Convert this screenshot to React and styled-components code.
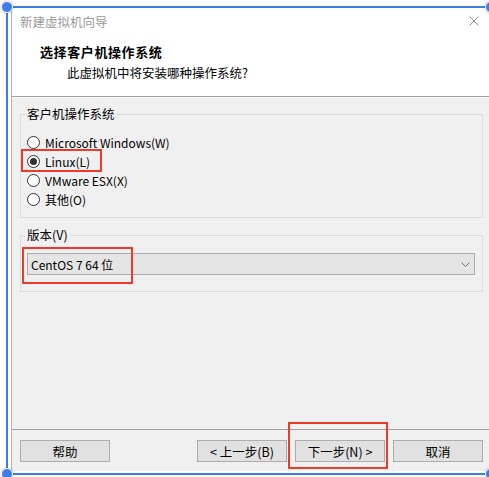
import React from "react";
import styled, { createGlobalStyle } from "styled-components";

const GlobalStyle = createGlobalStyle`
  html, body { margin: 0; padding: 0; background: #ffffff; }
  body {
    width: 489px;
    height: 477px;
    overflow: hidden;
    font-family: "Noto Sans CJK SC", "Microsoft YaHei", sans-serif;
    font-size: 12.5px;
    color: #000;
  }
  * { box-sizing: border-box; }
`;

const Stage = styled.div`
  position: relative;
  width: 489px;
  height: 477px;
  overflow: hidden;
`;

const Selection = styled.div`
  position: relative;
  margin: 6px 0 0 6px;
  width: 486px;
  height: 469px;
  border: 2px solid #3b7ee6;
  padding: 0 0 2px 3px;
  display: flex;
`;

const Handle = styled.div`
  position: absolute;
  width: 12px;
  height: 12px;
  border-radius: 50%;
  background: #3b7ee6;
  border: 1.5px solid #ffffff;
  box-shadow: 0 0 2px rgba(0, 0, 0, 0.35);
  left: ${(p) => (p.$right ? "auto" : "-7px")};
  right: ${(p) => (p.$right ? "-7px" : "auto")};
  top: ${(p) => (p.$bottom ? "auto" : "-7px")};
  bottom: ${(p) => (p.$bottom ? "-7px" : "auto")};
  z-index: 3;
`;

const Dialog = styled.div`
  flex: 1;
  display: flex;
  flex-direction: column;
  border-left: 1px solid #b4b4b4;
  background: #ffffff;
`;

const TitleBar = styled.div`
  height: 26px;
  display: flex;
  align-items: center;
  justify-content: space-between;
  padding: 0 11px 0 8px;
  color: #9a9a9a;
`;

const Header = styled.div`
  height: 63px;
  padding-top: 9px;
  display: flex;
  flex-direction: column;
  border-bottom: 1px solid #a0a0a0;
`;

const HeaderTitle = styled.div`
  padding-left: 28px;
  line-height: 18px;
  font-weight: 700;
  font-size: 13px;
  letter-spacing: 0.6px;
`;

const HeaderSub = styled.div`
  padding-left: 55px;
  margin-top: 3px;
  line-height: 18px;
`;

const Body = styled.div`
  flex: 1;
  background: #f0f0f0;
  border-top: 1px solid #ffffff;
  padding: 0 7px 0 8px;
  display: flex;
  flex-direction: column;
`;

const GroupBox = styled.div`
  border: 1px solid #dcdcdc;
  margin-top: ${(p) => p.$top}px;
  padding-bottom: ${(p) => p.$bottom}px;
  display: flex;
  flex-direction: column;
`;

const Legend = styled.div`
  align-self: flex-start;
  margin: -9px 0 0 4px;
  padding: 0 2px;
  line-height: 16px;
  background: #f0f0f0;
`;

const RadioList = styled.div`
  margin-top: 11px;
  display: flex;
  flex-direction: column;
`;

const RadioRow = styled.div`
  height: 19px;
  display: flex;
  align-items: center;
  padding-left: 6px;
  gap: 5px;
  font-size: 12px;
`;

const RadioCircle = styled.span`
  width: 13px;
  height: 13px;
  border-radius: 50%;
  border: 1px solid #333333;
  background: #ffffff;
  display: flex;
  align-items: center;
  justify-content: center;
  &::after {
    content: "";
    width: 7px;
    height: 7px;
    border-radius: 50%;
    background: ${(p) => (p.$checked ? "#333333" : "transparent")};
  }
`;

const Select = styled.div`
  margin: 10px 7px 0 6px;
  height: 22px;
  border: 1px solid #acacac;
  background: #e5e5e5;
  display: flex;
  align-items: center;
  justify-content: space-between;
  padding: 0 4px 0 3px;
  font-size: 12px;
`;

const Footer = styled.div`
  background: #f0f0f0;
  border-top: 1px solid #a0a0a0;
  padding: 10px 7px 9px 8px;
  display: flex;
  gap: 8px;
`;

const Button = styled.div`
  width: 90px;
  height: 22px;
  border: 1px solid #adadad;
  background: #e1e1e1;
  display: flex;
  align-items: center;
  justify-content: center;
  margin-right: ${(p) => (p.$push ? "auto" : "0")};
`;

const Mark = styled.div`
  position: absolute;
  border: 2px solid #ee3a2b;
  z-index: 4;
`;

function Radio({ label, checked }) {
  return (
    <RadioRow>
      <RadioCircle $checked={checked} />
      <span>{label}</span>
    </RadioRow>
  );
}

export default function App() {
  return (
    <Stage>
      <GlobalStyle />
      <Selection>
        <Handle />
        <Handle $right />
        <Handle $bottom />
        <Handle $right $bottom />
        <Dialog>
          <TitleBar>
            <span>新建虚拟机向导</span>
            <svg width="10" height="10" viewBox="0 0 10 10">
              <path d="M0.5 0.5 L9.5 9.5 M9.5 0.5 L0.5 9.5" stroke="#8a8a8a" strokeWidth="1" fill="none" />
            </svg>
          </TitleBar>
          <Header>
            <HeaderTitle>选择客户机操作系统</HeaderTitle>
            <HeaderSub>此虚拟机中将安装哪种操作系统?</HeaderSub>
          </Header>
          <Body>
            <GroupBox $top={16} $bottom={8}>
              <Legend>客户机操作系统</Legend>
              <RadioList>
                <Radio label="Microsoft Windows(W)" />
                <Radio label="Linux(L)" checked />
                <Radio label="VMware ESX(X)" />
                <Radio label="其他(O)" />
              </RadioList>
            </GroupBox>
            <GroupBox $top={17} $bottom={16}>
              <Legend>版本(V)</Legend>
              <Select>
                <span>CentOS 7 64 位</span>
                <svg width="9" height="5" viewBox="0 0 9 5">
                  <path d="M0.5 0.5 L4.5 4.5 L8.5 0.5" stroke="#707070" strokeWidth="1" fill="none" />
                </svg>
              </Select>
            </GroupBox>
          </Body>
          <Footer>
            <Button $push>帮助</Button>
            <Button>&lt; 上一步(B)</Button>
            <Button>下一步(N) &gt;</Button>
            <Button>取消</Button>
          </Footer>
        </Dialog>
      </Selection>
      <Mark style={{ left: 21, top: 149, width: 81, height: 23 }} />
      <Mark style={{ left: 22, top: 247, width: 111, height: 37 }} />
      <Mark style={{ left: 288, top: 422, width: 100, height: 47 }} />
    </Stage>
  );
}
